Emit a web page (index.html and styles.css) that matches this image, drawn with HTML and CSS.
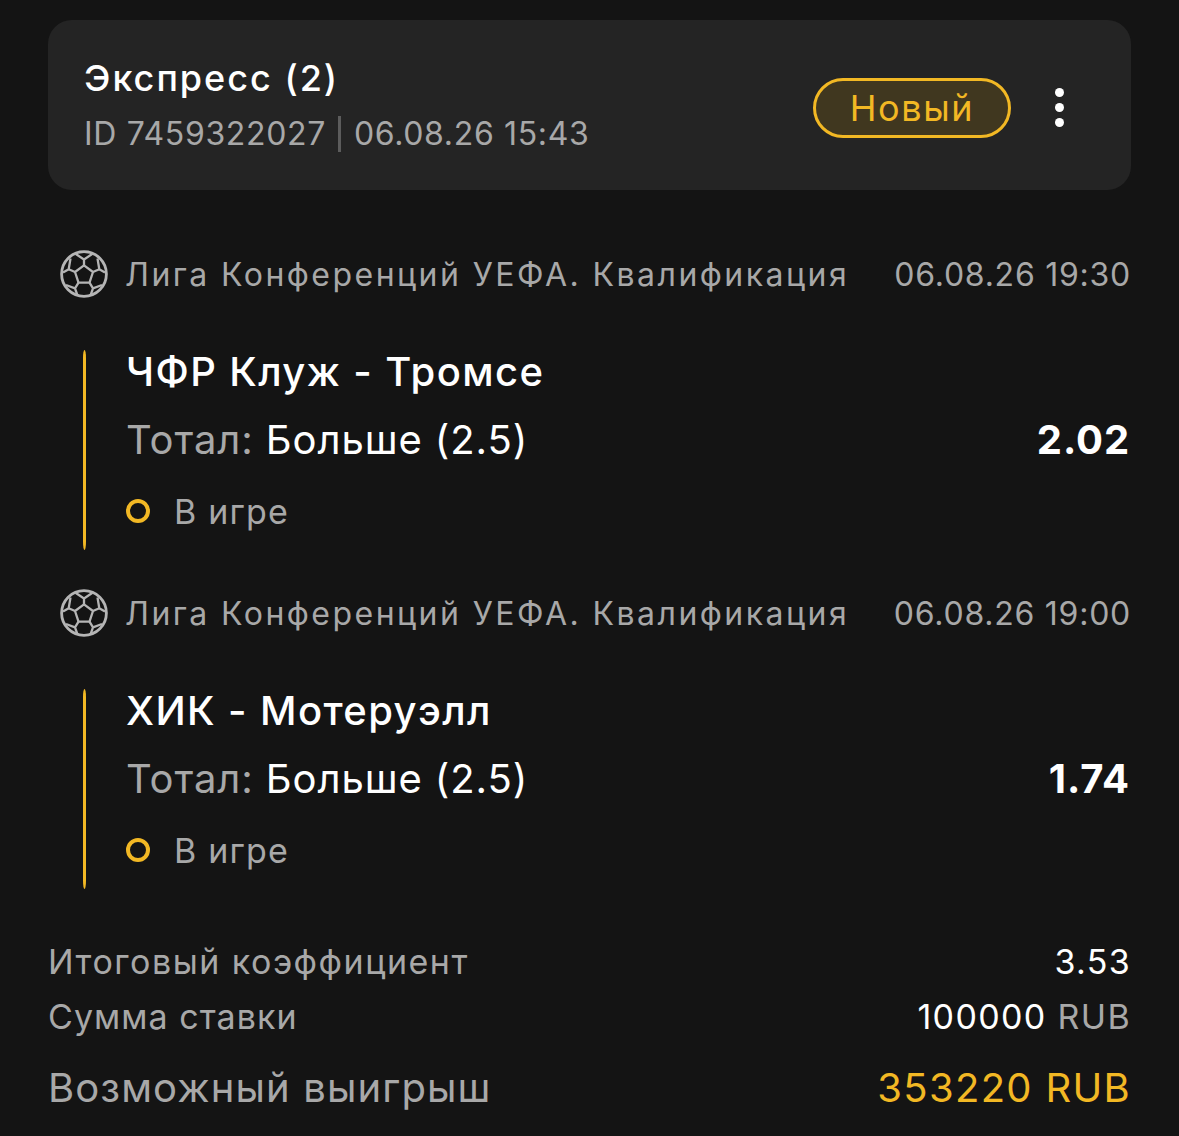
FILE: index.html
```html
<!DOCTYPE html>
<html lang="ru">
<head>
    <meta charset="UTF-8">
    <meta name="viewport" content="width=device-width, initial-scale=1.0">
    <title>Экспресс</title>
    <link rel="stylesheet" href="styles.css">
</head>
<body>
    <svg class="sprite" width="0" height="0">
        <symbol id="ball" viewBox="0 0 48 48">
            <g fill="none" stroke="currentColor" stroke-width="2.3" stroke-linejoin="round">
                <circle cx="24" cy="24" r="22.4" stroke-width="2.8"/>
                <path d="M24 15.3 33 22 29.5 32.7H18.5L15 22Z"/>
                <path d="M24 15.3V9.5L15.5 3.8M24 9.5 32.5 3.8"/>
                <path d="M33 22 39.3 19.3 45 22.5M39.3 19.3 37.5 8.5"/>
                <path d="M15 22 8.7 19.3 3 22.5M8.7 19.3 10.5 8.5"/>
                <path d="M29.5 32.7 33 38.3 30.5 45.5M33 38.3 42 35"/>
                <path d="M18.5 32.7 15 38.3 17.5 45.5M15 38.3 6 35"/>
            </g>
        </symbol>
    </svg>

    <div class="page">
        <!-- шапка купона -->
        <div class="card">
            <div class="card-info">
                <div class="card-title">Экспресс (2)</div>
                <div class="card-meta">
                    <span>ID 7459322027</span>
                    <span class="sep"></span>
                    <span>06.08.26 15:43</span>
                </div>
            </div>
            <span class="badge">Новый</span>
            <div class="dots"><i></i><i></i><i></i></div>
        </div>

        <!-- события -->
        <div class="event first">
            <div class="event-head">
                <svg class="ball"><use href="#ball"/></svg>
                <span class="league">Лига Конференций УЕФА. Квалификация</span>
                <span class="event-date">06.08.26 19:30</span>
            </div>
            <div class="leg">
                <div class="leg-bar"></div>
                <div class="leg-body">
                    <div class="teams">ЧФР Клуж - Тромсе</div>
                    <div class="market">
                        <span><span class="market-name">Тотал:</span> Больше (2.5)</span>
                        <span class="odds">2.02</span>
                    </div>
                    <div class="status"><span class="ring"></span>В игре</div>
                </div>
            </div>
        </div>

        <div class="event">
            <div class="event-head">
                <svg class="ball"><use href="#ball"/></svg>
                <span class="league">Лига Конференций УЕФА. Квалификация</span>
                <span class="event-date">06.08.26 19:00</span>
            </div>
            <div class="leg">
                <div class="leg-bar"></div>
                <div class="leg-body">
                    <div class="teams">ХИК - Мотеруэлл</div>
                    <div class="market">
                        <span><span class="market-name">Тотал:</span> Больше (2.5)</span>
                        <span class="odds">1.74</span>
                    </div>
                    <div class="status"><span class="ring"></span>В игре</div>
                </div>
            </div>
        </div>

        <!-- итоги -->
        <div class="summary">
            <div class="row">
                <span class="long">Итоговый коэффициент</span>
                <span class="val">3.53</span>
            </div>
            <div class="row">
                <span class="short">Сумма ставки</span>
                <span><span class="val">100000</span> RUB</span>
            </div>
            <div class="row total">
                <span>Возможный выигрыш</span>
                <span class="win">353220 RUB</span>
            </div>
        </div>
    </div>
</body>
</html>
```

FILE: styles.css
```css
html, body {
    margin: 0;
    padding: 0;
}

body {
    background-color: #141414;
    color: #ffffff;
    font-family: "Inter", "Noto Sans", sans-serif;
    height: 1136px;
    overflow: hidden;
}

.sprite {
    position: absolute;
}

.page {
    padding: 20px 48px 0 48px;
}

.card {
    display: flex;
    align-items: center;
    height: 170px;
    box-sizing: border-box;
    padding: 0 67px 0 36px;
    background-color: #242424;
    border-radius: 24px;
}

.card-info {
    flex: 1;
}

.card-title {
    font-size: 36px;
    line-height: 44px;
    font-weight: 500;
    letter-spacing: 2px;
}

.card-meta {
    display: flex;
    align-items: center;
    margin-top: 14px;
    font-size: 32px;
    line-height: 40px;
    letter-spacing: 0.65px;
    color: #a8a8a8;
}

.sep {
    width: 3px;
    height: 36px;
    margin: 0 13px 0 12px;
    background-color: #5c5c5c;
}

.badge {
    box-sizing: border-box;
    width: 198px;
    height: 60px;
    margin-top: 5px;
    line-height: 54px;
    text-align: center;
    font-size: 36px;
    letter-spacing: 1.6px;
    color: #f2b824;
    background-color: #40371f;
    border: 3px solid #f2b824;
    border-radius: 30px;
}

.dots {
    display: flex;
    flex-direction: column;
    gap: 6px;
    margin: 5px 0 0 44px;
}

.dots i {
    display: block;
    width: 9px;
    height: 9px;
    border-radius: 50%;
    background-color: #ffffff;
}

.event {
    margin-top: 37px;
}

.event.first {
    margin-top: 58px;
}

.event-head {
    display: flex;
    align-items: center;
    height: 52px;
    padding-left: 12px;
    color: #a8a8a8;
    font-size: 32px;
}

.ball {
    width: 48px;
    height: 48px;
    margin-right: 17px;
    color: #b5b5b5;
}

.league {
    flex: 1;
    letter-spacing: 2.46px;
}

.event-date {
    letter-spacing: 0.75px;
}

.leg {
    display: flex;
    margin: 50px 0 0 35px;
    height: 200px;
}

.leg-bar {
    flex: none;
    width: 3px;
    background-color: #f2b824;
    border-radius: 50% / 8px;
}

.leg-body {
    flex: 1;
    margin-left: 40px;
}

.teams {
    font-size: 40px;
    line-height: 44px;
    font-weight: 500;
    letter-spacing: 1.4px;
}

.market {
    display: flex;
    justify-content: space-between;
    align-items: center;
    margin-top: 24px;
    font-size: 40px;
    line-height: 44px;
    letter-spacing: 0.9px;
}

.market-name {
    color: #a8a8a8;
}

.odds {
    margin-right: 1px;
    font-weight: 700;
}

.status {
    display: flex;
    align-items: center;
    margin-top: 28px;
    font-size: 34px;
    line-height: 44px;
    letter-spacing: 1.2px;
    color: #a8a8a8;
}

.ring {
    width: 24px;
    height: 24px;
    box-sizing: border-box;
    margin: -2px 24px 0 0;
    border: 4px solid #f2b824;
    border-radius: 50%;
}

.summary {
    margin-top: 45px;
    color: #a8a8a8;
    font-size: 34px;
    letter-spacing: 1.35px;
}

.row {
    display: flex;
    justify-content: space-between;
    align-items: center;
    height: 55px;
}

.long {
    letter-spacing: 1.5px;
}

.short {
    letter-spacing: 1.05px;
}

.val {
    color: #ffffff;
}

.total {
    height: 86px;
    font-size: 40px;
    letter-spacing: 1.1px;
}

.win {
    color: #f2b824;
    letter-spacing: 1.3px;
}
```
